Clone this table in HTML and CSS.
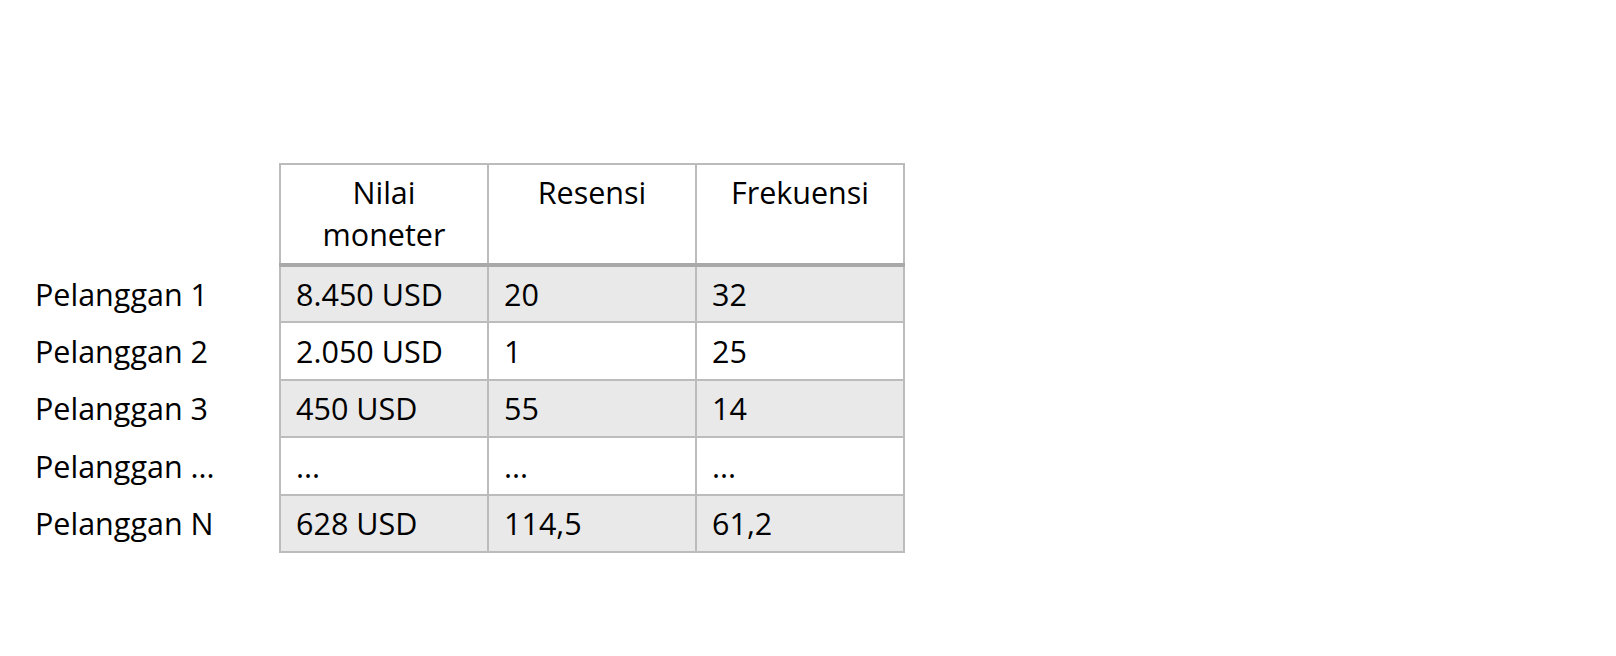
FILE: index.html
```html
<!DOCTYPE html>
<html>
<head>
<meta charset="utf-8">
<link rel="stylesheet" href="styles.css">
</head>
<body>
<div class="page">
  <table class="rfm">
    <colgroup>
      <col class="c-label"><col class="c-data"><col class="c-data"><col class="c-data">
    </colgroup>
    <thead>
      <tr class="head">
        <th class="label"></th>
        <th>Nilai<br>moneter</th>
        <th>Resensi</th>
        <th>Frekuensi</th>
      </tr>
    </thead>
    <tbody>
      <tr class="shade"><td class="label">Pelanggan 1</td><td>8.450 USD</td><td>20</td><td>32</td></tr>
      <tr><td class="label">Pelanggan 2</td><td>2.050 USD</td><td>1</td><td>25</td></tr>
      <tr class="shade"><td class="label">Pelanggan 3</td><td>450 USD</td><td>55</td><td>14</td></tr>
      <tr><td class="label">Pelanggan ...</td><td>...</td><td>...</td><td>...</td></tr>
      <tr class="shade"><td class="label">Pelanggan N</td><td>628 USD</td><td>114,5</td><td>61,2</td></tr>
    </tbody>
  </table>
</div>
</body>
</html>
```
FILE: styles.css
```css
html, body {
  margin: 0;
  padding: 0;
  background: #ffffff;
}
.page {
  padding: 163px 0 0 35px;
  font-family: "Open Sans", "Liberation Sans", sans-serif;
  color: #000;
}
.rfm {
  border-collapse: collapse;
  table-layout: fixed;
  font-size: 30.5px;
}
.c-label { width: 245px; }
.c-data { width: 208px; }
.rfm th, .rfm td {
  border: 2px solid #bcbcbc;
  padding: 0 0 0 15px;
  text-align: left;
  font-weight: normal;
  height: 57.4px;
  box-sizing: border-box;
  white-space: nowrap;
}
.rfm .head th {
  height: 101px;
  vertical-align: top;
  text-align: center;
  padding: 6px 0 0 0;
  line-height: 42px;
  border-bottom: 4px solid #a9a9a9;
}
.rfm .label, .rfm .head .label {
  border: none;
  padding: 0;
  background: transparent;
}
.rfm .shade td:not(.label) {
  background: #e9e9e9;
}
```
